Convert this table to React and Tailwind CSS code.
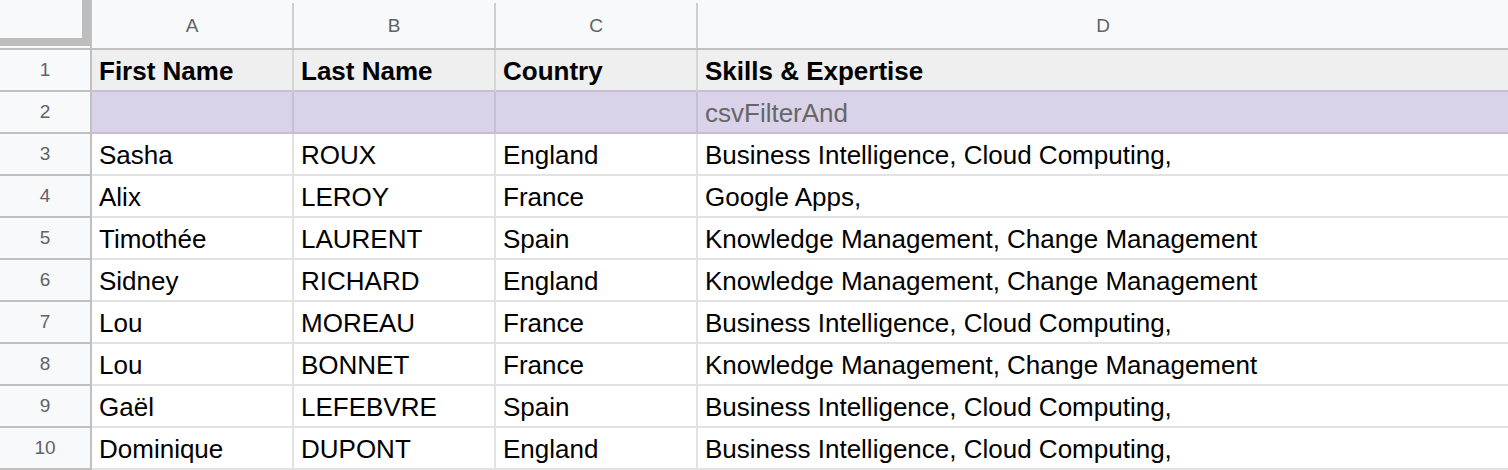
import React from 'react'

const cols = ['A', 'B', 'C', 'D']
const widths = ['w-[202px]', 'w-[202px]', 'w-[202px]', 'flex-1']

const header = ['First Name', 'Last Name', 'Country', 'Skills & Expertise']

const rows = [
  ['Sasha', 'ROUX', 'England', 'Business Intelligence, Cloud Computing,'],
  ['Alix', 'LEROY', 'France', 'Google Apps,'],
  ['Timothée', 'LAURENT', 'Spain', 'Knowledge Management, Change Management'],
  ['Sidney', 'RICHARD', 'England', 'Knowledge Management, Change Management'],
  ['Lou', 'MOREAU', 'France', 'Business Intelligence, Cloud Computing,'],
  ['Lou', 'BONNET', 'France', 'Knowledge Management, Change Management'],
  ['Gaël', 'LEFEBVRE', 'Spain', 'Business Intelligence, Cloud Computing,'],
  ['Dominique', 'DUPONT', 'England', 'Business Intelligence, Cloud Computing,'],
]

function RowNum({ n }) {
  return (
    <div className="w-[92px] shrink-0 flex items-center justify-center pt-[1px] bg-[#f8f9fa] border-r-2 border-b-2 border-[#c0c0c0] text-[19px] text-[#5f6368]">
      {n}
    </div>
  )
}

function Cell({ i, children, cls = '' }) {
  const last = i === cols.length - 1
  return (
    <div className={`${widths[i]} shrink-0 flex items-center pl-[7px] pt-[3px] overflow-hidden whitespace-nowrap border-b-2 ${last ? '' : 'border-r-2'} ${cls}`}>
      {children}
    </div>
  )
}

export default function App() {
  return (
    <div className="w-[1508px] h-[470px] overflow-hidden bg-white text-black [font-family:'Liberation_Sans',Arial,sans-serif]">
      {/* column letters */}
      <div className="flex h-[50px] bg-[#f8f9fa] border-b-2 border-[#c0c0c0]">
        <div className="w-[92px] shrink-0 flex">
          <div className="w-[90px] h-[46px] border-r-[8px] border-b-[8px] border-[#bdbdbd]" />
          <div className="w-[2px] h-full bg-[#c0c0c0]" />
        </div>
        {cols.map((c, i) => (
          <div key={c} className={`${widths[i]} shrink-0 flex`}>
            <div className="flex-1 flex items-center justify-center pt-[4px] text-[19px] text-[#5f6368]">{c}</div>
            {i < cols.length - 1 && <div className="w-[2px] mt-[3px] bg-[#cfcfcf]" />}
          </div>
        ))}
      </div>

      {/* header row */}
      <div className="flex h-[42px]">
        <RowNum n={1} />
        {header.map((h, i) => (
          <Cell key={h} i={i} cls="bg-[#efefef] border-r-[#d6d6d6] border-b-[#c6bfd3] font-bold text-[26px]">
            {h}
          </Cell>
        ))}
      </div>

      {/* filter row */}
      <div className="flex h-[42px]">
        <RowNum n={2} />
        {cols.map((c, i) => (
          <Cell key={c} i={i} cls="bg-[#d9d2e9] border-r-[#c6bfd3] border-b-[#c6bfd3] text-[26px] text-[#666666]">
            {i === 3 ? 'csvFilterAnd' : ''}
          </Cell>
        ))}
      </div>

      {rows.map((r, ri) => (
        <div key={ri} className="flex h-[42px]">
          <RowNum n={ri + 3} />
          {r.map((v, i) => (
            <Cell key={i} i={i} cls="border-[#e2e2e2] text-[26px]">
              {v}
            </Cell>
          ))}
        </div>
      ))}
    </div>
  )
}
